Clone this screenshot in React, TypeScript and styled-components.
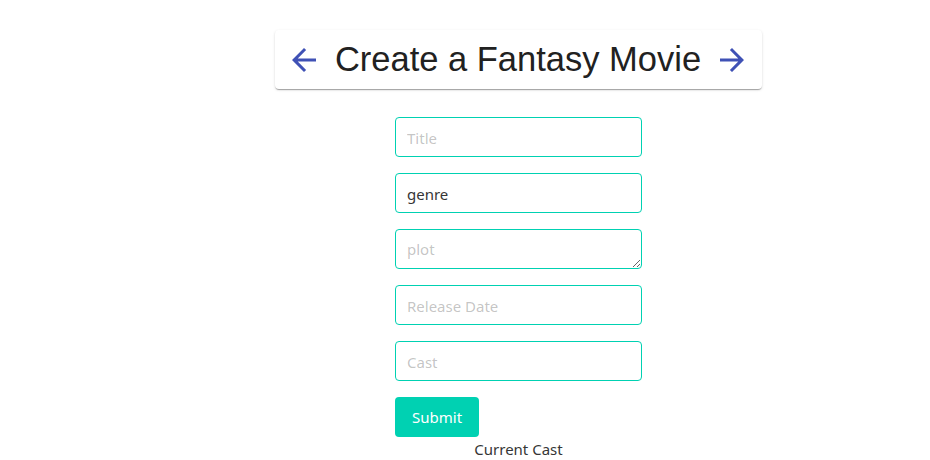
import React from 'react';
import styled, {createGlobalStyle} from "styled-components";

const GlobalStyle = createGlobalStyle`
  * { box-sizing: border-box; }
  body {
    margin: 0;
    background: #fff;
    font-family: "Noto Sans", "Open Sans", sans-serif;
    color: #363636;
  }
`

const ArrowLeft = () => (
    <svg viewBox="0 0 24 24" width="36" height="36" fill="#3f51b5">
        <path d="M20 11H7.83l5.59-5.59L12 4l-8 8 8 8 1.41-1.41L7.83 13H20v-2z"/>
    </svg>
);

const ArrowRight = () => (
    <svg viewBox="0 0 24 24" width="36" height="36" fill="#3f51b5">
        <path d="M12 4l-1.41 1.41L16.17 11H4v2h12.17l-5.58 5.59L12 20l8-8z"/>
    </svg>
);

export default function App() {
    return (
        <Page>
            <GlobalStyle/>
            <HeaderCard>
                <IconButton aria-label="previous"><ArrowLeft/></IconButton>
                <HeaderTitle>Create a Fantasy Movie</HeaderTitle>
                <IconButton aria-label="next"><ArrowRight/></IconButton>
            </HeaderCard>
            <MovieForm onSubmit={e => e.preventDefault()}>
                <Field placeholder="Title"/>
                <Field placeholder="genre" defaultValue="genre"/>
                <AreaField placeholder="plot"/>
                <Field placeholder="Release Date"/>
                <Field placeholder="Cast"/>
                <SubmitButton type="submit">Submit</SubmitButton>
            </MovieForm>
            <CastLabel>Current Cast</CastLabel>
        </Page>
    );
}

const Page = styled.div`
  display: flex;
  flex-direction: column;
  align-items: center;
  padding: 30px 0 0 107px;
  min-height: 460px;
`

const HeaderCard = styled.div`
  display: flex;
  align-items: center;
  gap: 13px;
  height: 59px;
  padding: 0 12px 0 11px;
  background: #fff;
  border-radius: 4px;
  box-shadow: 0 2px 1px -1px rgba(0,0,0,0.2), 0 1px 1px 0 rgba(0,0,0,0.14), 0 1px 3px 0 rgba(0,0,0,0.12);
`

const HeaderTitle = styled.h1`
  margin: 0;
  font-family: "Liberation Sans", Arial, sans-serif;
  font-weight: 400;
  font-size: 34.5px;
  color: #212121;
  line-height: 1;
`

const IconButton = styled.button`
  display: flex;
  padding: 0;
  border: none;
  background: none;
  cursor: pointer;
`

const MovieForm = styled.form`
  display: flex;
  flex-direction: column;
  align-items: flex-start;
  gap: 16px;
  margin-top: 28px;
  width: 247px;
`

const Field = styled.input`
  width: 100%;
  height: 40px;
  padding: 1px 11px 0;
  border: 1px solid #00d1b2;
  border-radius: 4px;
  font-family: inherit;
  font-size: 15px;
  color: #363636;
  outline: none;
  &::placeholder { color: rgba(54,54,54,0.3); }
`

const AreaField = styled.textarea`
  width: 100%;
  height: 40px;
  padding: 9px 11px 5px;
  border: 1px solid #00d1b2;
  border-radius: 4px;
  font-family: inherit;
  font-size: 15px;
  color: #363636;
  outline: none;
  resize: vertical;
  &::placeholder { color: rgba(54,54,54,0.3); }
`

const SubmitButton = styled.button`
  height: 40px;
  padding: 0 17px;
  border: none;
  border-radius: 4px;
  background: #00d1b2;
  color: #fff;
  font-family: inherit;
  font-size: 15px;
  cursor: pointer;
`

const CastLabel = styled.p`
  margin: 2px 0 0;
  font-size: 15px;
  color: #363636;
`
